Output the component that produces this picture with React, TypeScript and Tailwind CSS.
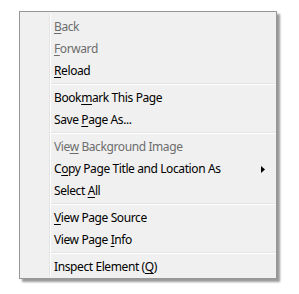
import React from "react";

type Item =
  | { sep: true }
  | { label: string; key: number; disabled?: boolean; submenu?: boolean };

const items: Item[] = [
  { label: "Back", key: 0, disabled: true },
  { label: "Forward", key: 0, disabled: true },
  { label: "Reload", key: 0 },
  { sep: true },
  { label: "Bookmark This Page", key: 4 },
  { label: "Save Page As...", key: 5 },
  { sep: true },
  { label: "View Background Image", key: 3, disabled: true },
  { label: "Copy Page Title and Location As", key: 1, submenu: true },
  { label: "Select All", key: 7 },
  { sep: true },
  { label: "View Page Source", key: 0 },
  { label: "View Page Info", key: 10 },
  { sep: true },
  { label: "Inspect Element (Q)", key: 17 },
];

function Label({ text, k }: { text: string; k: number }) {
  return (
    <span>
      {text.slice(0, k)}
      <span className="underline underline-offset-[2px]">{text[k]}</span>
      {text.slice(k + 1)}
    </span>
  );
}

export default function App() {
  return (
    <div className="w-[299px] h-[294px] bg-white pl-[19px] pt-[11px] font-['Noto_Sans',sans-serif] text-[12px] tracking-[-0.4px]">
      <div className="relative w-[258px] border border-[#979797] bg-[#f0f0f0] pt-[4px] shadow-[3px_3px_2px_rgba(0,0,0,0.4)]">
        <div className="absolute left-[29px] top-[2px] bottom-[2px] w-px bg-[#e2e3e3]" />
        <div className="absolute left-[30px] top-[2px] bottom-[2px] w-px bg-white" />
        {items.map((it, i) =>
          "sep" in it ? (
            <div key={i} className="h-[5px] pl-[30px] pr-[1px] pt-[1px]">
              <div className="h-px bg-[#e2e3e3]" />
              <div className="h-px bg-white" />
            </div>
          ) : (
            <div
              key={i}
              className={
                "flex h-[22px] items-center justify-between pl-[34px] pr-[11px] leading-none " +
                (it.disabled ? "text-[#6d6d6d]" : "text-black")
              }
            >
              <Label text={it.label} k={it.key} />
              {it.submenu && (
                <svg width="4" height="7" viewBox="0 0 4 7">
                  <path d="M0 0 L4 3.5 L0 7 Z" fill="#000" />
                </svg>
              )}
            </div>
          )
        )}
      </div>
    </div>
  );
}
